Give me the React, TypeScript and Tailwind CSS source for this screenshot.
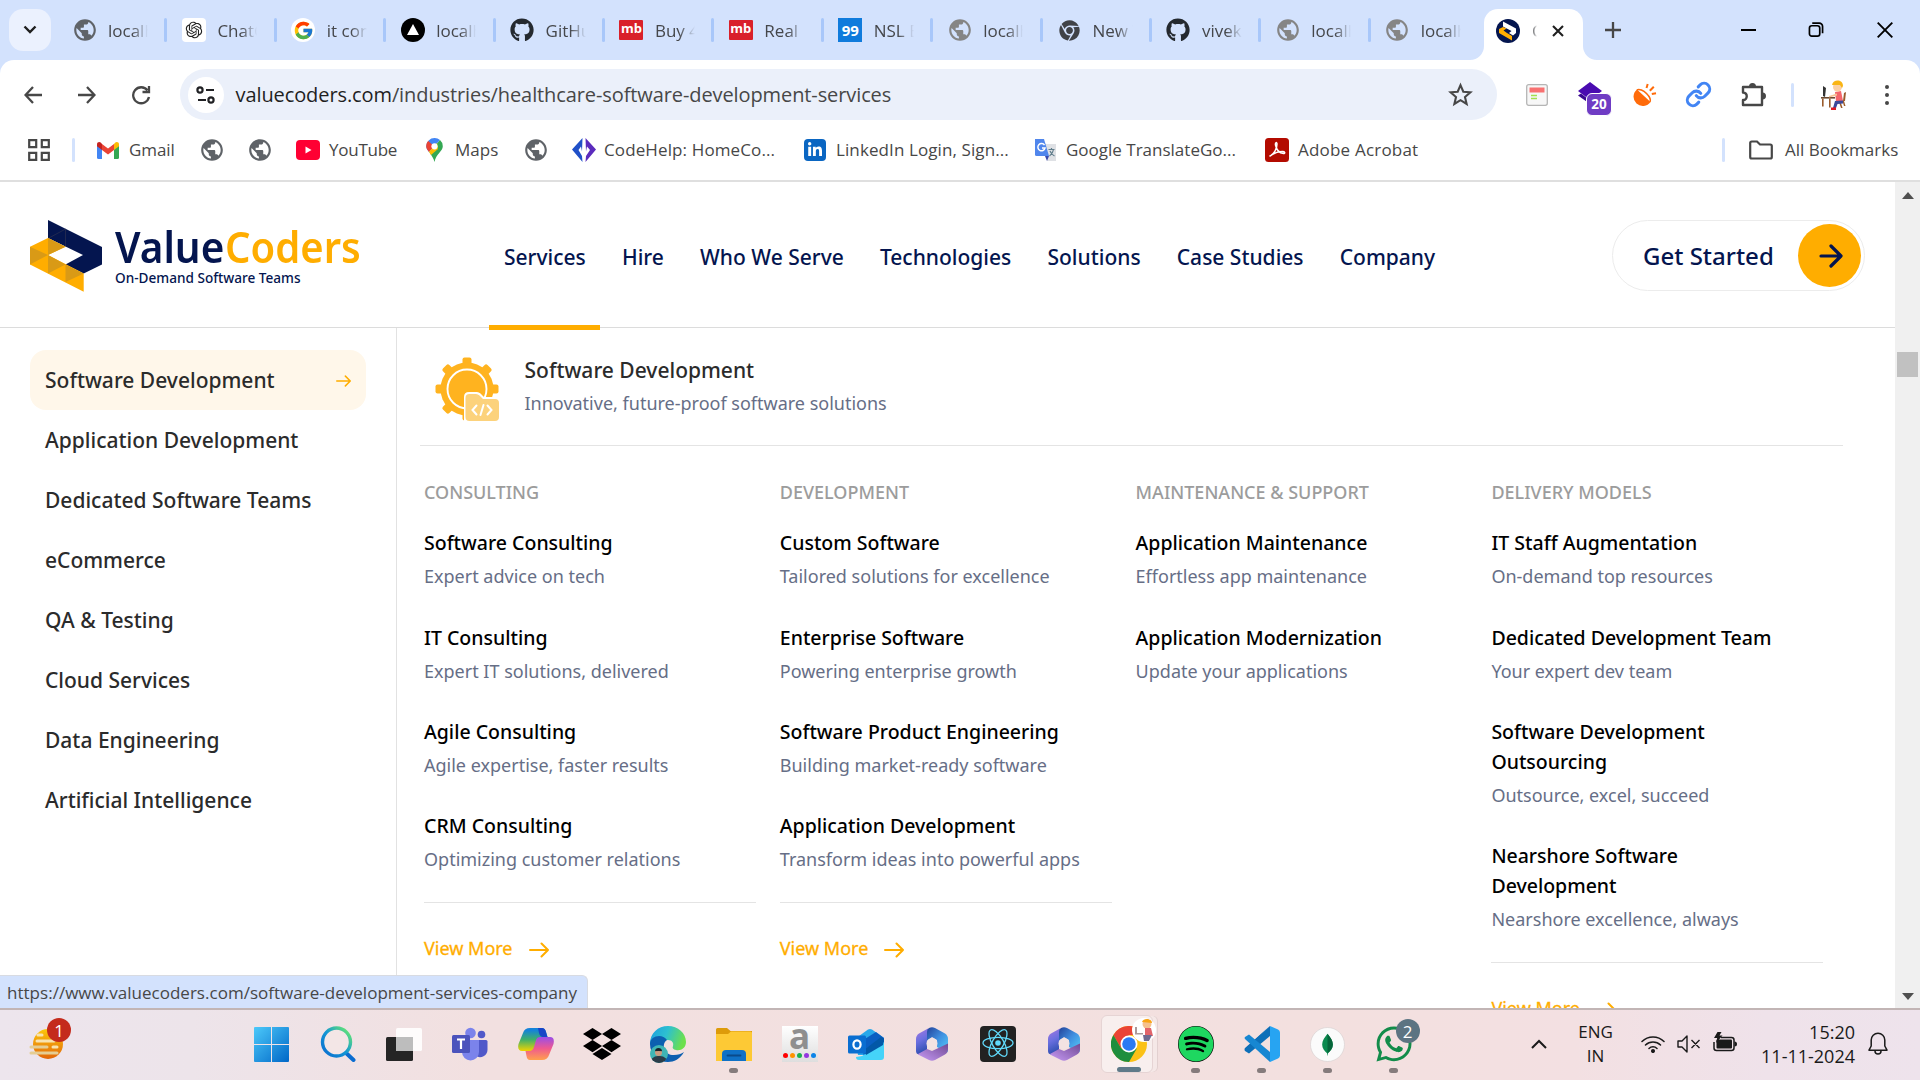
import React from "react";
import { FaGithub, FaDropbox, FaSpotify, FaWhatsapp, FaLinkedinIn, FaChrome } from "react-icons/fa";
import { FcGoogle } from "react-icons/fc";
import { MdPublic } from "react-icons/md";
import { RiOpenaiFill } from "react-icons/ri";

type Kids = { children?: React.ReactNode };

/* ---------- browser chrome ---------- */

const Globe = ({ gray }: { gray?: boolean }) => (
  <MdPublic className={gray ? "size-[26px] text-[#858585]" : "size-[26px] text-[#5f6368]"} />
);

const Mb = () => (
  <div className="flex h-5 w-6 items-center justify-center rounded-[1px] bg-[#d9202a] pb-0.5 font-['Open_Sans'] text-[13px] font-bold text-white">mb</div>
);

const tabs: { icon: React.ReactNode; label: string }[] = [
  { icon: <Globe />, label: "localh" },
  { icon: <div className="flex size-6 items-center justify-center rounded bg-white"><RiOpenaiFill className="size-5 text-[#222]" /></div>, label: "ChatG" },
  { icon: <div className="flex size-6 items-center justify-center rounded-full bg-white"><FcGoogle className="size-[21px]" /></div>, label: "it con" },
  { icon: <div className="flex size-6 items-center justify-center rounded-full bg-black"><svg viewBox="0 0 24 24" className="size-6"><path d="M12 6l6 11H6z" fill="#fff" /></svg></div>, label: "localh" },
  { icon: <FaGithub className="size-6 text-[#24292f]" />, label: "GitHu" },
  { icon: <Mb />, label: "Buy 4" },
  { icon: <Mb />, label: "Real E" },
  { icon: <div className="flex size-6 items-center justify-center bg-[#0f7bdc] font-['Open_Sans'] text-[15px] font-bold text-white">99</div>, label: "NSL B" },
  { icon: <Globe gray />, label: "localh" },
  { icon: <FaChrome className="size-[21px] text-[#404247]" />, label: "New T" },
  { icon: <FaGithub className="size-6 text-[#24292f]" />, label: "vivek" },
  { icon: <Globe gray />, label: "localh" },
  { icon: <Globe gray />, label: "localh" },
];

function TabStrip() {
  return (
    <div className="flex h-[60px] shrink-0 bg-[#d3e2fd] pl-[9px]">
      <div className="mt-[9px] flex size-[42px] items-center justify-center rounded-[14px] bg-[#ebf1fe]">
        <svg viewBox="0 0 14 10" className="h-[10px] w-[14px]"><path d="M1.5 1.5L7 7l5.5-5.5" fill="none" stroke="#1f1f1f" strokeWidth="2.4" /></svg>
      </div>
      <div className="ml-[7px] flex">
        {tabs.map((t, i) => (
          <div key={i} className="flex h-[60px] w-[109.4px] items-center pl-[13.500px]">
            <div className="flex w-[26px] shrink-0 justify-center">{t.icon}</div>
            <div className="ml-[10.500px] w-10 overflow-hidden whitespace-nowrap pt-0.5 text-[17px] text-[#45474b] [mask-image:linear-gradient(to_right,black_60%,transparent)]">{t.label}</div>
            {i < tabs.length - 1 && <div className="ml-auto h-6 w-[3px] rounded bg-[#a8c7fa]" />}
          </div>
        ))}
      </div>
      <div className="relative ml-[4px] mt-[9px] flex h-[51px] w-[99px] items-center rounded-t-[14px] bg-white pb-2">
        <svg viewBox="0 0 14 14" className="absolute -left-[14px] bottom-0 size-[14px]"><path d="M14 0v14H0A14 14 0 0 0 14 0z" fill="#fff" /></svg>
        <svg viewBox="0 0 14 14" className="absolute -right-[14px] bottom-0 size-[14px]"><path d="M0 0v14h14A14 14 0 0 1 0 0z" fill="#fff" /></svg>
        <svg viewBox="0 0 24 24" className="ml-3 size-6">
          <circle cx="12" cy="12" r="12" fill="#04154f" />
          <path d="M7 2.500l13 7v4.500l-3 2.500-4-2.500 2.500-2-8.500-4.500z" fill="#fff" />
          <path d="M7 8L3 10v4l13 7.500v-4.500l-5-3-3.500-2.500 3-2z" fill="#ffad00" />
        </svg>
        <div className="ml-3 w-[5px] overflow-hidden text-[17px] text-[#45474b] [mask-image:linear-gradient(to_right,black,transparent)]">C</div>
        <svg viewBox="0 0 12 12" className="ml-[15px] size-3"><path d="M1 1l10 10M11 1L1 11" stroke="#1f1f1f" strokeWidth="2.1" /></svg>
      </div>
      <div className="flex h-[60px] flex-1 items-center">
        <svg viewBox="0 0 16 16" className="ml-[22px] size-4"><path d="M8 0v16M0 8h16" stroke="#474747" strokeWidth="2.3" /></svg>
        <div className="ml-[120px] h-[2px] w-[15px] bg-black" />
        <svg viewBox="0 0 16 16" className="ml-[52px] size-4 pb-px"><rect x="1" y="4" width="11" height="11" rx="2.500" fill="none" stroke="#000" strokeWidth="1.8" /><path d="M4 1.200h7.500A3.500 3.500 0 0 1 15 4.700V12" fill="none" stroke="#000" strokeWidth="1.8" /></svg>
        <svg viewBox="0 0 16 16" className="ml-[53px] size-4"><path d="M.7.7l14.600 14.600M15.300.7L.7 15.300" stroke="#000" strokeWidth="1.900" /></svg>
      </div>
    </div>
  );
}

const Slot = ({ children }: Kids) => <div className="flex w-[53.700px] shrink-0 items-center justify-center">{children}</div>;

function Toolbar() {
  const s = { fill: "none", stroke: "#474747", strokeWidth: 2.3 };
  return (
    <div className="h-[60px] shrink-0 bg-[#d3e2fd]">
      <div className="flex h-full items-center rounded-t-[14px] bg-white pl-[6px] pt-[9px]">
        <Slot><svg viewBox="0 0 18 18" className="size-[18px]"><path {...s} d="M18 9H2M9 1L1.500 9 9 17" /></svg></Slot>
        <Slot><svg viewBox="0 0 18 18" className="size-[18px]"><path {...s} d="M0 9h16M9 1l7.500 8L9 17" /></svg></Slot>
        <Slot><svg viewBox="0 0 20 20" className="ml-px size-5"><path {...s} d="M16.500 5.300A8 8 0 1 0 18 12M18 1v6h-6.500" /></svg></Slot>
        <div className="ml-[13px] flex h-[51px] w-[1317px] items-center rounded-full bg-[#ebf0fa] pl-[8px] pr-6">
          <div className="flex size-9 items-center justify-center rounded-full bg-white">
            <svg viewBox="0 0 20 18" className="h-[18px] w-5" fill="none" stroke="#202124" strokeWidth="2.2"><circle cx="4" cy="4" r="2.600" /><path d="M10 4h8M2 14h8" /><circle cx="15" cy="14" r="2.600" /></svg>
          </div>
          <div className="ml-[11.500px] flex-1 text-[20px] tracking-[-0.1px] text-[#474747]"><span className="text-[#1f1f1f]">valuecoders.com</span>/industries/healthcare-software-development-services</div>
          <svg viewBox="0 0 24 24" className="size-[25px]"><path d="M12 3l2.700 6.300 6.800.6-5.200 4.500 1.600 6.700L12 17.500l-5.900 3.600 1.600-6.700-5.200-4.500 6.800-.6z" fill="none" stroke="#474747" strokeWidth="2" /></svg>
        </div>
        <svg viewBox="0 0 22 22" className="ml-[29px] size-[22px]"><rect x=".7" y=".7" width="20.600" height="20.600" rx="2" fill="#f7f7f7" stroke="#b5b5b5" strokeWidth="1.300" /><path d="M3.500 3.500h15v5h-15z" fill="#f87171" /><path d="M5 11.500h6M5 14.500h6" stroke="#a3e04f" strokeWidth="1.600" /></svg>
        <div className="relative ml-[30px] size-[30px]">
          <svg viewBox="0 0 30 30" className="size-[30px]"><path d="M12 2l12 9-12 9L0 11z" fill="#4a0bb0" /><path d="M0 15.500l3-2 9 7v3.500z" fill="#3a0890" /></svg>
          <div className="absolute left-[8px] top-[13px] flex h-[23px] w-[26px] items-center justify-center rounded-[6px] border border-white bg-[#6f3cc4] text-[13.500px] font-bold text-white">20</div>
        </div>
        <svg viewBox="0 0 24 24" className="ml-[25px] size-6"><path d="M4 6.500L17.500 19A9.300 9.300 0 1 1 4 6.500z" fill="#ff6b0a" /><path d="M4 7C6 5.500 10.500 7.500 13.500 10.500S18 17 17 19" fill="none" stroke="#ff6b0a" strokeWidth="1.600" /><path d="M13.500 5l1.200-4M16.800 7.800l4-4M18.800 11l4.200-.8" stroke="#ff6b0a" strokeWidth="2" /></svg>
        <svg viewBox="0 0 24 24" className="ml-[28px] size-[27px]"><path d="M10 13a5 5 0 0 0 7.540.54l3-3a5 5 0 0 0-7.070-7.070l-1.720 1.710M14 11a5 5 0 0 0-7.540-.54l-3 3a5 5 0 0 0 7.070 7.070l1.710-1.710" fill="none" stroke="#4285f4" strokeWidth="2.700" strokeLinecap="round" /></svg>
        <svg viewBox="0 0 26 26" className="ml-[29px] size-[26px]"><path d="M2 5h19v18H2v-5c5 0 5-7.500 0-7.500z" fill="none" stroke="#474747" strokeWidth="2.400" strokeLinejoin="round" /><path d="M8 4.500a3.500 3.500 0 0 1 7 0zM21.500 10.500a3.500 3.500 0 0 1 0 7z" fill="#474747" /></svg>
        <div className="ml-[24px] h-6 w-[3px] rounded bg-[#d3e2fd]" />
        <svg viewBox="0 0 28 30" className="ml-[24px] size-[30px]">
          <path d="M4 6l3 2-1 9-2-1z" fill="#333" /><path d="M2 17h14v1.600H2z" fill="#6b4a30" /><path d="M3 18.500h1.600v8H3zM10 18.500h1.600v9H10zM25 13l2-1-1 9h-2zM20 22h1.600l2 6H22zM23.500 21H25l1.500 5H25z" fill="#9a5b2c" />
          <path d="M16 12l6-1 2 10h-7z" fill="#f4676c" /><path d="M10 16l8-2.500v2L10 17.500z" fill="#f6c294" /><path d="M24 20.500l-8 .5-2 7h3l1.500-4 5.500-.5z" fill="#3b4a9a" /><path d="M12 27.500h5V30h-5z" fill="#e01b24" />
          <circle cx="18.500" cy="7" r="4.500" fill="#fbd0a4" /><path d="M13 5c1-6 11-6 11 1l-1 2-2-3z" fill="#f9b514" />
        </svg>
        <svg viewBox="0 0 4 20" className="ml-[37px] h-5 w-1" fill="#474747"><circle cx="2" cy="2" r="2" /><circle cx="2" cy="10" r="2" /><circle cx="2" cy="18" r="2" /></svg>
      </div>
    </div>
  );
}

function Bookmarks() {
  return (
    <div className="flex h-[62px] shrink-0 items-center whitespace-nowrap border-b-2 border-[#dfdfdf] bg-white text-[17px] text-[#474747]">
      <svg viewBox="0 0 22 22" className="ml-7 size-[22px]" fill="none" stroke="#474747" strokeWidth="2.200"><path d="M1.200 1.200h7v7h-7zM13.800 1.200h7v7h-7zM1.200 13.800h7v7h-7zM13.800 13.800h7v7h-7z" /></svg>
      <div className="ml-[22px] h-6 w-[3px] rounded bg-[#d3e2fd]" />
      <svg viewBox="0 0 22 17" className="ml-[22px] h-[17px] w-[22px]"><path d="M0 3v12.500Q0 17 1.500 17H5V7z" fill="#4285f4" /><path d="M22 3v12.500q0 1.500-1.500 1.500H17V7z" fill="#34a853" /><path d="M17 2v6l5-3.800V2.500C22 0 19.500-.5 18 .8z" fill="#fbbc04" /><path d="M0 2.500v1.700L5 8V2L4 .8C2.500-.5 0 0 0 2.500z" fill="#c5221f" /><path d="M5 2v6l6 4.500L17 8V2l-6 4.500z" fill="#ea4335" /></svg>
      <div className="ml-[10px] w-[46px] tracking-[-0.1px]">Gmail</div>
      <div className="ml-[24px]"><Globe /></div>
      <div className="ml-[22px]"><Globe /></div>
      <svg viewBox="0 0 24 20" className="ml-[23px] h-5 w-6"><rect width="24" height="20" rx="4" fill="#ff0033" /><path d="M9.500 6.500v7l6-3.500z" fill="#fff" /></svg>
      <div className="ml-[9px] w-[68px] tracking-[-0.25px]">YouTube</div>
      <svg viewBox="0 0 17 24" className="ml-[29px] h-6 w-[17px]"><path d="M8.500 0A8.300 8.300 0 0 1 14 2L3 14C1.500 12 .2 10.500.2 8.300A8.300 8.300 0 0 1 8.500 0z" fill="#4285f4" /><path d="M2.200 3L8 8l-5 6C1.500 12 .2 10.500.2 8.300.2 6 1 4.300 2.200 3z" fill="#ea4335" /><path d="M14 2a8 8 0 0 1 2.800 6.300c0 5-6.800 7.700-8.300 15.700-.9-4-3-6.500-5-9.500z" fill="#34a853" /><path d="M3 13.800L11 5l1 6-7 6z" fill="#fbbc04" /><circle cx="8.500" cy="8.300" r="3.100" fill="#fff" /></svg>
      <div className="ml-[12px] w-[44px]">Maps</div>
      <div className="ml-[24px]"><Globe /></div>
      <svg viewBox="0 0 24 24" className="ml-[23px] size-6"><path d="M10.500 0L0 11.500 10.500 24l-.5-6-3.500-6L9 8.500l1 5z" fill="#2050c8" /><path d="M13.500 0L24 11.500 13.500 24l.5-6 4-6L15 8.500l-1 5z" fill="#5b2bbd" /></svg>
      <div className="ml-[8px] w-[171px] tracking-[0.12px]">CodeHelp: HomeCo...</div>
      <div className="ml-[29px] flex size-[22px] items-center justify-center rounded-sm bg-[#0a66c2]"><FaLinkedinIn className="size-[16px] text-white" /></div>
      <div className="ml-[10px] w-[172px] tracking-[0.1px]">LinkedIn Login, Sign...</div>
      <svg viewBox="0 0 22 22" className="ml-[27px] size-[22px]"><path d="M9 5h12v17H12z" fill="#dfe1e5" /><path d="M0 0h9l5 17H1.500Q0 17 0 15.500z" fill="#5086ec" /><path d="M14 17l-2 5-2-5z" fill="#3949ab" /><path d="M9.500 6.200A3.600 3.600 0 1 0 10 9H7" fill="none" stroke="#fff" strokeWidth="1.500" /><path d="M13.500 10.500h6M16.500 9v1.500M14.500 17c2-1.500 3.500-3.500 4-6.500M15 12c1 2.500 2.500 4 4.500 5" fill="none" stroke="#607d8b" strokeWidth="1.200" /></svg>
      <div className="ml-[9px] w-[170px]">Google TranslateGo...</div>
      <svg viewBox="0 0 24 24" className="ml-[29px] size-6"><rect width="24" height="24" rx="3.500" fill="#b30b00" /><path d="M5 18c4-2 7-7 7-12 0-2-2-2-1.500 1 1 5 4 8 8 8.500 2 0 1.500-2-1-2-5 0-8 1.500-11 3.500-1 .7-1.500 1.300-1.500 1z" fill="none" stroke="#fff" strokeWidth="1.500" /></svg>
      <div className="ml-[9px] tracking-[0.2px]">Adobe Acrobat</div>
      <div className="ml-auto h-6 w-[3px] rounded bg-[#d3e2fd]" />
      <svg viewBox="0 0 24 20" className="ml-6 h-5 w-6"><path d="M1.200 3Q1.200 1.500 2.700 1.500H8l3 3h10.300q1.500 0 1.500 1.500v11q0 1.500-1.500 1.500H2.700q-1.500 0-1.500-1.500z" fill="none" stroke="#474747" strokeWidth="2.200" /></svg>
      <div className="ml-3 mr-[22px] w-[113px]">All Bookmarks</div>
    </div>
  );
}

/* ---------- site ---------- */

const Arrow = ({ className }: { className: string }) => (
  <svg viewBox="0 0 20 16" className={className} fill="none" stroke="#ffad00" strokeWidth="2" strokeLinecap="round" strokeLinejoin="round"><path d="M1 8h18M12.500 1.500L19 8l-6.500 6.500" /></svg>
);

const nav = ["Services", "Hire", "Who We Serve", "Technologies", "Solutions", "Case Studies", "Company"];

function SiteHeader() {
  return (
    <div className="flex h-[146px] shrink-0 border-b border-[#dcdcdc] pl-[30px] text-[#04154f]">
      <svg viewBox="30 220 72 72" className="mt-[38px] size-[72px]">
        <path d="M48 220l54 27v17.500l-18.300 9L65.500 264.500 83 255l-17.500-8.500L48 238z" fill="#04154f" />
        <path d="M48 238.500l17.500-9.500v17.500" fill="none" stroke="#2c3050" strokeWidth=".7" />
        <path d="M30 246.700L48 238l17.500 8.700L48 255l35.700 18.500v18.200L30 264.500z" fill="#ffad00" />
        <path d="M48 238l17.500 8.700L48 255zM30 246.700L48 255l-18 9.500zM48 255l17.500 9.500L48 273.500zM65.500 264.500l18.200 9-18.200 8.500z" fill="#d99a16" />
      </svg>
      <div className="ml-[13px] mt-[38px] w-[374px]">
        <div className="flex h-[53px] items-center text-[43.500px] font-semibold leading-none">
          <span className="w-[109.500px] origin-left scale-x-[0.93]">Value</span>
          <span className="origin-left scale-x-[0.92] text-[#ffad00]">Coders</span>
        </div>
        <div className="-mt-[4px] text-[13.600px] font-medium leading-[18px]">On-Demand Software Teams</div>
      </div>
      <div className="flex gap-[6.200px]">
        {nav.map((n, i) => (
          <div key={n} className="relative flex h-[145px] items-center whitespace-nowrap px-[15px] pt-[7px] text-[21px] font-medium">
            {n}
            {i === 0 && <div className="absolute -bottom-[3px] left-0 h-[5px] w-[111px] bg-[#ffad00]" />}
          </div>
        ))}
      </div>
      <div className="ml-auto mr-[30px] mt-[38px] flex h-[71px] w-[253px] items-center rounded-full border border-[#ececec] pl-[30px] pr-[3px]">
        <span className="text-[24px] font-medium">Get Started</span>
        <div className="ml-auto flex size-[63px] items-center justify-center rounded-full bg-[#ffad00]">
          <svg viewBox="0 0 24 24" className="ml-0.5 size-6" fill="none" stroke="#04154f" strokeWidth="3.200" strokeLinecap="round" strokeLinejoin="round"><path d="M2 12h19M12 2l10 10-10 10" /></svg>
        </div>
      </div>
    </div>
  );
}

const side = ["Software Development", "Application Development", "Dedicated Software Teams", "eCommerce", "QA & Testing", "Cloud Services", "Data Engineering", "Artificial Intelligence"];

type Column = { head: string; items: [string, string][]; more: boolean };
const columns: Column[] = [
  { head: "CONSULTING", more: true, items: [["Software Consulting", "Expert advice on tech"], ["IT Consulting", "Expert IT solutions, delivered"], ["Agile Consulting", "Agile expertise, faster results"], ["CRM Consulting", "Optimizing customer relations"]] },
  { head: "DEVELOPMENT", more: true, items: [["Custom Software", "Tailored solutions for excellence"], ["Enterprise Software", "Powering enterprise growth"], ["Software Product Engineering", "Building market-ready software"], ["Application Development", "Transform ideas into powerful apps"]] },
  { head: "MAINTENANCE & SUPPORT", more: false, items: [["Application Maintenance", "Effortless app maintenance"], ["Application Modernization", "Update your applications"]] },
  { head: "DELIVERY MODELS", more: true, items: [["IT Staff Augmentation", "On-demand top resources"], ["Dedicated Development Team", "Your expert dev team"], ["Software Development Outsourcing", "Outsource, excel, succeed"], ["Nearshore Software Development", "Nearshore excellence, always"]] },
];

function GearIcon() {
  const teeth = [0, 45, 90, 135, 180, 225, 270, 315];
  return (
    <svg viewBox="0 0 64 64" className="size-16">
      {teeth.map((a) => <rect key={a} x="27.500" y=".5" width="9" height="12" rx="2" fill="#ffb31f" transform={`rotate(${a} 32 32)`} />)}
      <circle cx="32" cy="32" r="26.500" fill="#ffb31f" />
      <circle cx="32" cy="32" r="19.500" fill="none" stroke="#fff" strokeWidth="1.900" />
      <path d="M29 40q0-5 5-5h8q2 0 3.500 1.500L49 40h11q5 0 5 5v20H29z" fill="#fff" />
      <path d="M30.500 41q0-4 4-4h6.500q2 0 3.500 1.500L48 42h12q4 0 4 4v14q0 4-4 4H34.500q-4 0-4-4z" fill="#fcd27c" />
      <path d="M41.500 48.500L37.500 53l4 4.500M52.500 48.500l4 4.500-4 4.500M48.500 48l-3 10" fill="none" stroke="#fff" strokeWidth="2" strokeLinecap="round" />
    </svg>
  );
}

function MegaMenu() {
  return (
    <div className="flex flex-1">
      <div className="w-[397px] shrink-0 border-r border-[#e2e2e2] px-[30px] pt-[22px]">
        {side.map((s, i) => (
          <div key={s} className={i === 0 ? "flex h-[60px] w-[336px] items-center justify-between rounded-2xl bg-[#fff7ea] pl-[15px] pr-[15px] pt-[2px]" : "flex h-[60px] items-center pl-[15px] pt-[2px]"}>
            <span className="text-[21px] font-medium text-[#2b2b2b]">{s}</span>
            {i === 0 && <Arrow className="h-3 w-[15px]" />}
          </div>
        ))}
      </div>
      <div className="flex-1 pl-[23px]">
        <div className="flex h-[118px] w-[1423px] border-b border-[#e4e4e4] pl-[15px] pt-[29px]">
          <GearIcon />
          <div className="-mt-[2px] ml-[25.500px]">
            <div className="text-[21px] font-medium leading-[30px] text-[#2b2b2b]">Software Development</div>
            <div className="mt-[4px] text-[18px] leading-[28px] text-[#666e86]">Innovative, future-proof software solutions</div>
          </div>
        </div>
        <div className="grid grid-cols-[repeat(4,332px)] gap-x-[23.800px] pl-1 pt-[31px]">
          {columns.map((c) => (
            <div key={c.head}>
              <div className="mb-[21.300px] text-[18px] font-medium leading-[30px] text-[#9c9c9c]">{c.head}</div>
              {c.items.map(([t, d]) => (
                <div key={t} className="mb-[30.700px] pr-10">
                  <div className="text-[19.500px] font-medium leading-[30px] text-black">{t}</div>
                  <div className="mt-[4px] whitespace-nowrap text-[18px] leading-[29.700px] text-[#666e86]">{d}</div>
                </div>
              ))}
              {c.more && (
                <div className="-mt-[3.700px] flex items-center border-t border-[#e4e4e4] pt-[30px]">
                  <span className="text-[18px] leading-[30px] text-[#ffad00] [-webkit-text-stroke:0.3px]">View More</span>
                  <Arrow className="ml-[16px] mt-1 h-4 w-5" />
                </div>
              )}
            </div>
          ))}
        </div>
      </div>
    </div>
  );
}

/* ---------- taskbar ---------- */

const M365 = () => (
  <svg viewBox="0 0 32 34" className="h-[34px] w-8">
    <defs>
      <linearGradient id="ma" x1="0" y1="0" x2=".3" y2="1"><stop offset="0" stopColor="#a678e0" /><stop offset=".5" stopColor="#6a6fe0" /><stop offset="1" stopColor="#2f4fb0" /></linearGradient>
      <linearGradient id="mb" x1="0" y1="0" x2="1" y2="1"><stop offset="0" stopColor="#23439a" /><stop offset=".5" stopColor="#3f8fe0" /><stop offset="1" stopColor="#55cdf8" /></linearGradient>
      <linearGradient id="mc" x1="0" y1="1" x2="1" y2="0"><stop offset="0" stopColor="#c79bf5" /><stop offset="1" stopColor="#714a94" /></linearGradient>
    </defs>
    <path d="M12 1.500L3 6.500Q0 8.500 0 12v12q0 3 3 3.500l8-3.500V12Q11 8 14 5z" fill="url(#ma)" />
    <path d="M13 1q3-1.500 6 0l10 5.500q3 2 3 5.500v11q0 2-1 2.500L21 20v-7l-5-3-5 4V5q0-3 2-4z" fill="url(#mb)" />
    <path d="M2 27l9-5 5 2 16-7.500V22q0 3.500-3 5.500L19 33q-3 1.500-6 0L3 28z" fill="url(#mc)" />
    <circle cx="16" cy="16.500" r="5.500" fill="#f3e3e2" />
  </svg>
);

const apps: { el: React.ReactNode; dot?: boolean }[] = [
  { el: <svg viewBox="0 0 36 36" className="size-[35px]"><defs><linearGradient id="w" x1="0" y1="0" x2="1" y2="1"><stop offset="0" stopColor="#4cc9fa" /><stop offset="1" stopColor="#0067c7" /></linearGradient></defs><path d="M0 1q0-1 1-1h16.500v17.500H0zM18.500 0H35q1 0 1 1v16.500H18.500zM0 18.500h17.500V36H1q-1 0-1-1zM18.500 18.500H36V35q0 1-1 1H18.500z" fill="url(#w)" /></svg> },
  { el: <svg viewBox="0 0 36 36" className="size-9"><defs><linearGradient id="s" x1="1" y1="0" x2="0" y2="1"><stop offset=".1" stopColor="#5ee07a" /><stop offset=".5" stopColor="#1497d4" /><stop offset="1" stopColor="#0a6cd0" /></linearGradient></defs><path d="M25 26l8.500 8" stroke="#0a6cd0" strokeWidth="4" strokeLinecap="round" /><circle cx="16.500" cy="16" r="14" fill="#f3e6e6" stroke="url(#s)" strokeWidth="3.400" /></svg> },
  { el: <svg viewBox="0 0 36 36" className="size-9"><rect x="0" y="11" width="27" height="24" rx="1.500" fill="#252525" /><rect x="10" y="2" width="26" height="23" rx="1.500" fill="#fff" opacity=".88" /><rect x="10" y="11" width="17" height="14" fill="#bdbdbd" /></svg> },
  { el: <svg viewBox="0 0 36 36" className="size-9"><circle cx="18.500" cy="7" r="5.300" fill="#7b83eb" /><circle cx="29.500" cy="8.500" r="3.800" fill="#5059c9" /><path d="M24 14h10q1.500 0 1.500 1.500V24a7.500 7.500 0 0 1-11.500 6z" fill="#5059c9" /><path d="M10 14h17v12a8.500 8.500 0 0 1-17 0z" fill="#7b83eb" /><rect x="0" y="9" width="18" height="18" rx="1.500" fill="#4b53bc" /><path d="M5 13.500h8M9 13.500V23" stroke="#fff" strokeWidth="2.200" /></svg> },
  { el: <svg viewBox="0 0 36 36" className="size-9"><defs><linearGradient id="ca" x1="0" y1="0" x2="0" y2="1"><stop offset=".1" stopColor="#1583d8" /><stop offset=".5" stopColor="#3fb06a" /><stop offset="1" stopColor="#f2d400" /></linearGradient><linearGradient id="cb" x1="0" y1="0" x2="0" y2="1"><stop offset="0" stopColor="#9a4de8" /><stop offset=".5" stopColor="#ef5a8f" /><stop offset="1" stopColor="#ffa04d" /></linearGradient></defs><path d="M12 2h12q3 0 4 4l1.500 5h-4q-4 0-5 4l-2 7q-1 3-4 3H4q-5 0-3.500-7L5 7q1.500-5 7-5z" fill="url(#ca)" /><path d="M20 2h4q3 0 4 4l1.500 5H25q-3 0-4-4z" fill="#1745c7" /><path d="M24 34H12q-3 0-3.500-4L7.500 25H11q4 0 5-4l2-7q1-3 4-3h10q5 0 3.500 7L31 29q-1.500 5-7 5z" fill="url(#cb)" /></svg> },
  { el: <FaDropbox className="size-[38px] text-black" /> },
  { el: <div className="relative size-9"><svg viewBox="0 0 36 36" className="size-9"><defs><linearGradient id="e" x1="0" y1="0" x2="1" y2=".3"><stop offset="0" stopColor="#1b9de0" /><stop offset=".5" stopColor="#2dc0d0" /><stop offset="1" stopColor="#6be04d" /></linearGradient></defs><path d="M0 18C0 7 8 0 18 0s18 7 18 16c0 6-5 9-10 8-3-.5-4-2-3-4 1-3-1-6-5-6-8 0-11 7-8 13z" fill="url(#e)" /><path d="M0 18c0-8 12-11 17-4-6 4-3 14 5 15 5 .5 9-1 12-3-4 7-10 10-16 10C8 36 0 28 0 18z" fill="#0c5fb0" /></svg><div className="absolute -bottom-px left-0 size-[18px] overflow-hidden rounded-full bg-[#3fb5b5]"><div className="mx-auto mt-[3px] h-2 w-[7px] rounded-full border-t-[3px] border-[#18222b] bg-[#c99b80]" /><div className="h-2 w-full rounded-t-full bg-[#2b3d49]" /></div></div> },
  { dot: true, el: <svg viewBox="0 0 36 34" className="mt-0.5 h-[34px] w-9"><path d="M0 1.500Q0 0 1.500 0H11l3.500 3H36v8H0z" fill="#dd9b0a" /><path d="M0 6h12l3-2.500h19.500Q36 3.500 36 5v28H0z" fill="#fdc935" /><path d="M6 33v-7q0-4 4-4h16q4 0 4 4v7z" fill="#0f71c6" /><path d="M11.500 27.500h13" stroke="#0a4a8a" strokeWidth="1.800" strokeLinecap="round" /></svg> },
  { el: <div className="flex size-9 flex-col items-center bg-gradient-to-b from-white to-[#dedede]"><span className="h-[27px] font-['Open_Sans'] text-[35px] font-bold leading-[20px] text-[#8f8f8f]">a</span><div className="flex gap-[2px]"><i className="size-[5px] rounded-full bg-[#f00]" /><i className="size-[5px] rounded-full bg-[#ff9300]" /><i className="size-[5px] rounded-full bg-[#1cb050]" /><i className="size-[5px] rounded-full bg-[#9437e0]" /><i className="size-[5px] rounded-full bg-[#0a84e8]" /></div></div> },
  { el: <svg viewBox="0 0 36 36" className="size-9"><path d="M7 13L20 3.500Q22 2.500 24 3.500L36 12v17H10z" fill="#28a8ea" /><path d="M12 16L28 6l8 6v5L16 30z" fill="#0a5fc2" /><path d="M14 30l22-14v15q0 3-3 3H11q-3 0-3-3z" fill="#45d3f9" /><path d="M16 24l17-13 3 2-1 6-17 10z" fill="#0358a7" /><rect x="0" y="9.500" width="18" height="18" rx="1.500" fill="#0a6ed1" /><ellipse cx="9" cy="18.500" rx="3.600" ry="4.200" fill="none" stroke="#fff" strokeWidth="2.200" /></svg> },
  { el: <M365 /> },
  { el: <svg viewBox="0 0 36 36" className="size-9"><rect width="36" height="36" rx="4" fill="#222" /><g fill="none" stroke="#61dafb" strokeWidth="1.300"><ellipse cx="18" cy="17" rx="15" ry="5.700" /><ellipse cx="18" cy="17" rx="15" ry="5.700" transform="rotate(60 18 17)" /><ellipse cx="18" cy="17" rx="15" ry="5.700" transform="rotate(120 18 17)" /></g><circle cx="18" cy="17" r="2.800" fill="#61dafb" /></svg> },
  { el: <M365 /> },
  { el: <ChromeApp /> },
  { dot: true, el: <div className="flex size-9 items-center justify-center rounded-full bg-black"><FaSpotify className="size-9 text-[#1ed760]" /></div> },
  { dot: true, el: <svg viewBox="0 0 36 36" className="size-9"><path d="M26 0l-8 8L5 26.500 1 24q-1-1 0-2z" fill="#0a6cb4" /><path d="M26 0v10L5 27.500 1 25q-1-1 0-2z" fill="#0d6fb8" /><path d="M26 36v-10L5 8.500 1 11q-1 1 0 2z" fill="#1787d2" /><path d="M26 0l8 3.500q2 1 2 3v23q0 2-2 3L26 36z" fill="#27a4f2" /></svg> },
  { dot: true, el: <svg viewBox="0 0 36 36" className="size-[35px]"><circle cx="18" cy="18" r="17.500" fill="#fbfbfb" stroke="#dcd5d5" strokeWidth=".8" /><path d="M18 7c3 4 5.500 7 5.500 11 0 4-2.500 7-5 9L18 30l-.5-3C15 25 12.500 22 12.500 18c0-4 2.500-7 5.500-11z" fill="#0b8a4f" /><path d="M18 7c3 4 5.500 7 5.500 11 0 4-2.500 7-5.500 9z" fill="#06653a" /></svg> },
  { dot: true, el: <div className="relative"><FaWhatsapp className="size-[40px] text-[#128c4a]" /><div className="absolute -top-[5px] left-[22px] flex size-6 items-center justify-center rounded-full bg-[#5c7482] text-[17px] leading-none text-white">2</div></div> },
];

function ChromeApp() {
  return (
    <div className="relative -ml-[5px] flex h-[58px] w-[52px] items-center justify-center rounded-[6px] border border-[#e6d4d4] bg-[#f8efee] shadow-[5px_0_0_-1px_#f5e8e7,6px_0_0_-1px_#e2d0d0]">
      <svg viewBox="0 0 36 36" className="ml-[4px] size-9">
        <circle cx="18" cy="18" r="18" fill="#fbc116" />
        <path d="M2.400 9A18 18 0 0 1 33.600 9H18l-7.800 13.500z" fill="#ea4335" />
        <path d="M2.400 9A18 18 0 0 0 18 36l7.800-13.500H10.200z" fill="#1e8e3e" />
        <circle cx="18" cy="18" r="8.500" fill="#fff" /><circle cx="18" cy="18" r="6.800" fill="#2a7af3" />
      </svg>
      <div className="absolute -right-[4px] top-[2px] size-6 overflow-hidden rounded-full bg-white">
        <svg viewBox="0 0 24 24" className="size-6"><circle cx="15" cy="6" r="4.500" fill="#f5c08d" /><path d="M10 4c1-4 10-4 10 1z" fill="#f9a514" /><path d="M13 10h6l2 8h-8z" fill="#e2646a" /><path d="M3 9h2v6h6v1.500H3z" fill="#a99" /><path d="M11 17h9l-3 6h-5z" fill="#6f6a8f" /></svg>
      </div>
      <div className="absolute bottom-0 left-[15px] h-[5px] w-6 rounded-full bg-[#5f7a89]" />
    </div>
  );
}

function Taskbar() {
  return (
    <div className="flex h-[72px] shrink-0 items-stretch border-t-2 border-[#c2b5b5] bg-[linear-gradient(90deg,#ede5ed_0%,#ede4ea_10%,#f2e0e0_25%,#f3e0df_70%,#f3e0e2_82%,#efe2ea_92%,#eee3ec_100%)]">
      <div className="relative w-[238.500px]">
        <svg viewBox="0 0 36 36" className="ml-[29px] mt-[16px] size-[36px]"><defs><linearGradient id="sun" x1="0" y1="0" x2="0" y2="1"><stop offset="0" stopColor="#fcc70c" /><stop offset="1" stopColor="#e2660a" /></linearGradient></defs><circle cx="19" cy="18" r="15" fill="url(#sun)" /><g stroke="#f8e3b0" strokeWidth="3" strokeLinecap="round"><path d="M9 9h4M8 15h17M24 21h4" /><path d="M2 21h16M2 27h26" stroke="#e5cd93" /></g></svg>
        <div className="absolute left-[47px] top-[8px] flex size-6 items-center justify-center rounded-full bg-[#c42b1c] text-[17px] leading-none text-white">1</div>
      </div>
      <div className="flex">
        {apps.map((a, i) => (
          <div key={i} className="relative flex w-[66px] items-center justify-center pb-[2px]">
            {a.el}
            {a.dot && <div className="absolute bottom-[7px] h-[5px] w-[9px] rounded-full bg-[#857b7c]" />}
          </div>
        ))}
      </div>
      <div className="flex flex-1 items-center pb-[3px] text-[17px] text-[#1a1a1a]">
        <svg viewBox="0 0 16 10" className="ml-[104px] h-[10px] w-4"><path d="M1 9l7-7 7 7" fill="none" stroke="#1a1a1a" strokeWidth="2" /></svg>
        <div className="ml-[30px] w-[38px] text-center leading-[24px]">ENG<br />IN</div>
        <svg viewBox="0 0 24 18" className="ml-[26px] h-[18px] w-6" fill="none" stroke="#1a1a1a" strokeWidth="1.500" strokeLinecap="round"><path d="M1 6.500a15.500 15.500 0 0 1 22 0M4.500 10a10.600 10.600 0 0 1 15 0M8 13.500a5.700 5.700 0 0 1 8 0" /><circle cx="12" cy="16" r="1.300" fill="#1a1a1a" /></svg>
        <svg viewBox="0 0 24 18" className="ml-[12px] h-[18px] w-6" fill="none" stroke="#1a1a1a" strokeWidth="1.400" strokeLinejoin="round"><path d="M1 6h4l5-5v16l-5-5H1zM14.500 5l8 8M22.500 5l-8 8" /></svg>
        <svg viewBox="0 0 24 22" className="-mt-1 ml-[12px] h-[22px] w-6"><path d="M8 6.500h10.500q2.500 0 2.500 2.500v8q0 2.500-2.500 2.500H3.500Q1 19.500 1 17v-6" fill="none" stroke="#1a1a1a" strokeWidth="1.500" /><rect x="3.500" y="8.500" width="15.500" height="9" rx="1" fill="#1a1a1a" /><path d="M21.500 10.500q2.500 0 2.500 2.500t-2.500 2.500zM4.500 1h4L6.500 4.500h3L3 12l1.200-5H1z" fill="#1a1a1a" /></svg>
        <div className="ml-auto whitespace-nowrap text-right text-[18px] leading-[24px]">15:20<br />11-11-2024</div>
        <svg viewBox="0 0 20 24" className="ml-[13px] mr-[32px] h-[24px] w-5" fill="none" stroke="#1a1a1a" strokeWidth="1.500" strokeLinejoin="round"><path d="M10 1.200a6.800 6.800 0 0 1 6.800 6.800v6l2.200 4.200H1L3.200 14V8A6.800 6.800 0 0 1 10 1.200zM7 19a3 3 0 0 0 6 0" /></svg>
      </div>
    </div>
  );
}

export default function App() {
  return (
    <div className="flex h-[1080px] w-[1920px] flex-col overflow-hidden bg-white font-['Open_Sans',sans-serif]">
      <TabStrip />
      <Toolbar />
      <Bookmarks />
      <div className="relative flex h-[826px] shrink-0 overflow-hidden">
        <div className="flex h-[826px] w-[1895px] flex-col font-['Noto_Sans',sans-serif]">
          <SiteHeader />
          <MegaMenu />
        </div>
        <div className="flex w-[25px] flex-col items-center bg-[#f0f0f0]">
          <svg viewBox="0 0 12 7" className="mt-[10px] h-[7px] w-3"><path d="M0 7l6-7 6 7z" fill="#505050" /></svg>
          <div className="mt-[153px] h-[25px] w-[21px] bg-[#c1c1c1]" />
          <svg viewBox="0 0 12 7" className="mb-[8px] mt-auto h-[7px] w-3"><path d="M0 0l6 7 6-7z" fill="#505050" /></svg>
        </div>
        <div className="absolute bottom-0 left-0 flex h-[33px] w-[588px] items-center whitespace-nowrap rounded-tr-[6px] border-r border-t border-[#d8dbe2] bg-[#d3e2fd] pl-[7px] pt-px text-[17px] tracking-[0.02px] text-[#474747]">https://www.valuecoders.com/software-development-services-company</div>
      </div>
      <Taskbar />
    </div>
  );
}
